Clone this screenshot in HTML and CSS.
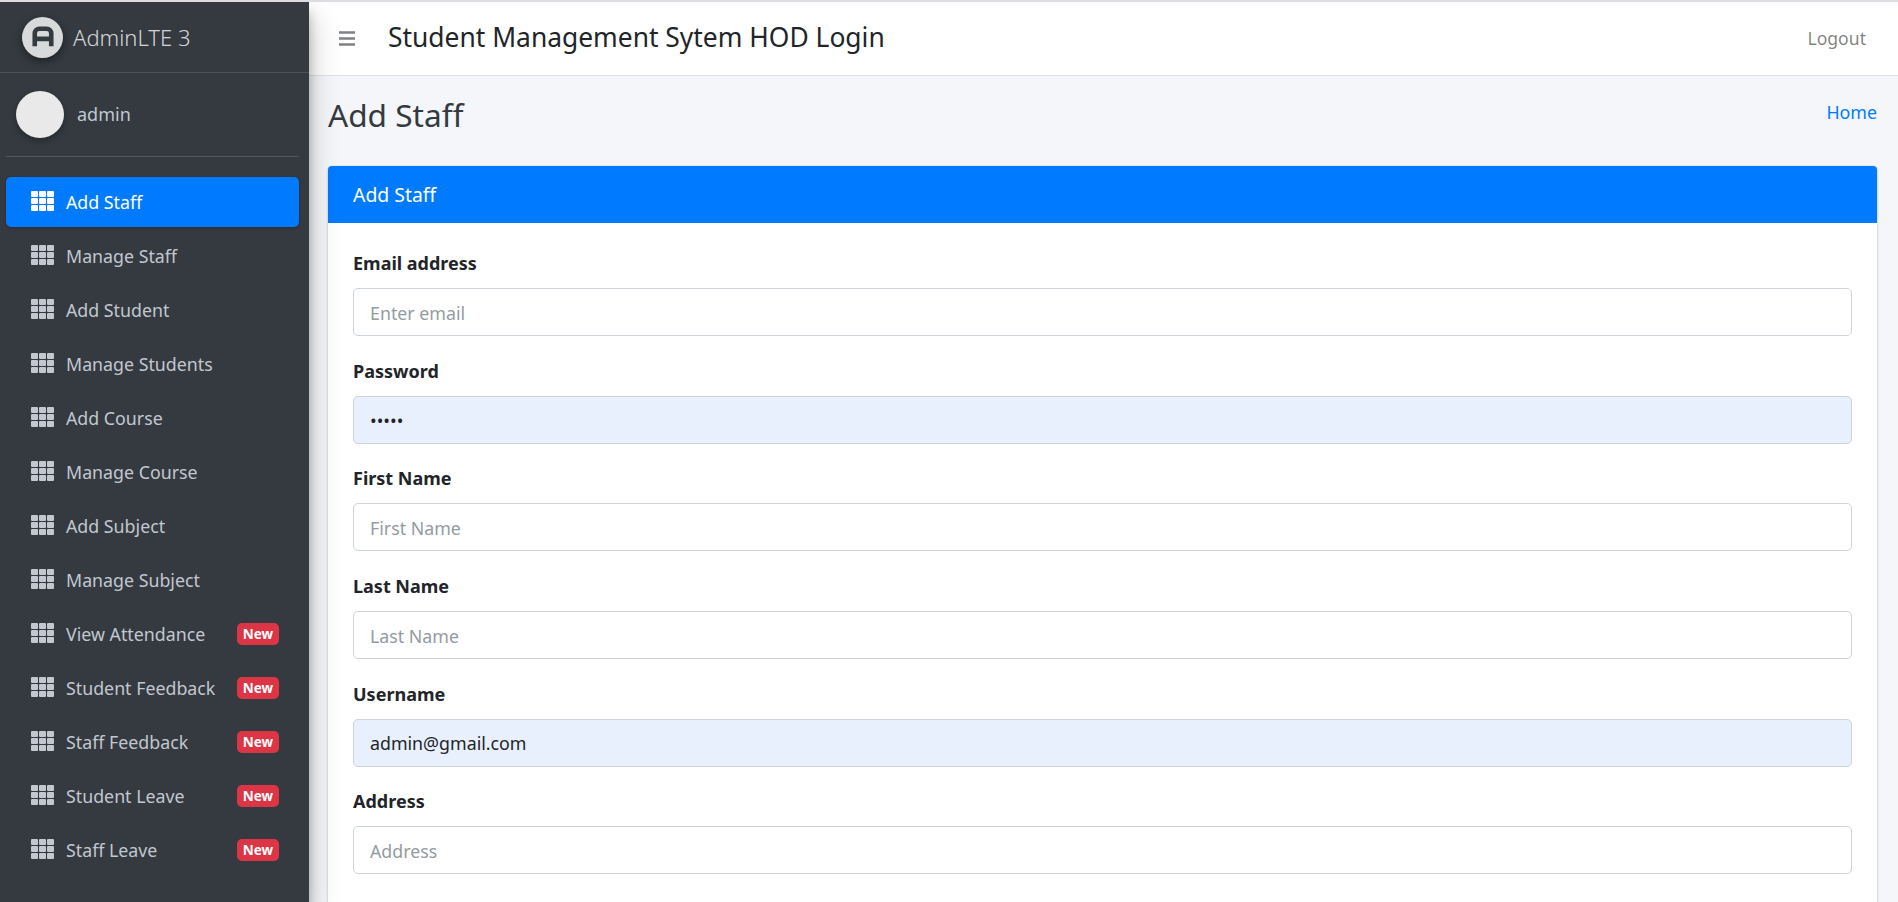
FILE: index.html

```html
<!DOCTYPE html>
<html lang="en">
<head>
  <meta charset="UTF-8">
  <meta name="viewport" content="width=device-width, initial-scale=1.0">
  <title>Add Staff</title>
  <link rel="stylesheet" href="styles.css">
</head>
<body>
  <svg class="icon-defs" width="0" height="0">
    <symbol id="th" viewBox="0 0 23 20">
      <rect x="0" y="0" width="7" height="6" rx="1"/><rect x="8" y="0" width="7" height="6" rx="1"/><rect x="16" y="0" width="7" height="6" rx="1"/>
      <rect x="0" y="7" width="7" height="6" rx="1"/><rect x="8" y="7" width="7" height="6" rx="1"/><rect x="16" y="7" width="7" height="6" rx="1"/>
      <rect x="0" y="14" width="7" height="6" rx="1"/><rect x="8" y="14" width="7" height="6" rx="1"/><rect x="16" y="14" width="7" height="6" rx="1"/>
    </symbol>
  </svg>

  <div class="wrapper">
    <aside class="sidebar">
      <a class="brand" href="#">
        <span class="brand-logo">
          <svg width="22" height="22" viewBox="0 0 24 24"><path d="M3 22V8a5 5 0 0 1 5-5h8a5 5 0 0 1 5 5v14M3 14h18" fill="none" stroke="#343a40" stroke-width="5"/></svg>
        </span>
        <span class="brand-text">AdminLTE 3</span>
      </a>
      <div class="user-panel">
        <span class="avatar"></span>
        <a class="user-name" href="#">admin</a>
      </div>
      <nav class="nav">
        <a class="nav-link active" href="#"><svg class="nav-icon"><use href="#th"/></svg>Add Staff</a>
        <a class="nav-link" href="#"><svg class="nav-icon"><use href="#th"/></svg>Manage Staff</a>
        <a class="nav-link" href="#"><svg class="nav-icon"><use href="#th"/></svg>Add Student</a>
        <a class="nav-link" href="#"><svg class="nav-icon"><use href="#th"/></svg>Manage Students</a>
        <a class="nav-link" href="#"><svg class="nav-icon"><use href="#th"/></svg>Add Course</a>
        <a class="nav-link" href="#"><svg class="nav-icon"><use href="#th"/></svg>Manage Course</a>
        <a class="nav-link" href="#"><svg class="nav-icon"><use href="#th"/></svg>Add Subject</a>
        <a class="nav-link" href="#"><svg class="nav-icon"><use href="#th"/></svg>Manage Subject</a>
        <a class="nav-link" href="#"><svg class="nav-icon"><use href="#th"/></svg>View Attendance<span class="badge">New</span></a>
        <a class="nav-link" href="#"><svg class="nav-icon"><use href="#th"/></svg>Student Feedback<span class="badge">New</span></a>
        <a class="nav-link" href="#"><svg class="nav-icon"><use href="#th"/></svg>Staff Feedback<span class="badge">New</span></a>
        <a class="nav-link" href="#"><svg class="nav-icon"><use href="#th"/></svg>Student Leave<span class="badge">New</span></a>
        <a class="nav-link" href="#"><svg class="nav-icon"><use href="#th"/></svg>Staff Leave<span class="badge">New</span></a>
      </nav>
    </aside>

    <div class="main">
      <header class="navbar">
        <svg class="menu-icon" width="16" height="15" viewBox="0 0 16 15"><path d="M0 1.5h16M0 7.5h16M0 13.5h16" stroke="#7f8183" stroke-width="2.4"/></svg>
        <span class="navbar-title">Student Management Sytem HOD Login</span>
        <a class="logout" href="#">Logout</a>
      </header>

      <div class="content">
        <div class="content-header">
          <h1>Add Staff</h1>
          <a class="crumb" href="#">Home</a>
        </div>

        <section class="card">
          <div class="card-header">Add Staff</div>
          <form class="card-body">
            <div class="form-group">
              <label>Email address</label>
              <input type="email" placeholder="Enter email">
            </div>
            <div class="form-group">
              <label>Password</label>
              <input class="autofill" type="password" value="admin">
            </div>
            <div class="form-group">
              <label>First Name</label>
              <input type="text" placeholder="First Name">
            </div>
            <div class="form-group">
              <label>Last Name</label>
              <input type="text" placeholder="Last Name">
            </div>
            <div class="form-group">
              <label>Username</label>
              <input class="autofill" type="text" value="admin@gmail.com">
            </div>
            <div class="form-group">
              <label>Address</label>
              <input type="text" placeholder="Address">
            </div>
          </form>
        </section>
      </div>
    </div>
  </div>
</body>
</html>
```

FILE: styles.css

```css
* {
  box-sizing: border-box;
}

html, body {
  height: 100%;
}

body {
  margin: 0;
  overflow: hidden;
  border-top: 2px solid #dcdde1;
  font-family: "Noto Sans", sans-serif;
  font-size: 18px;
  color: #212529;
  background: #f4f6f9;
}

a {
  text-decoration: none;
}

.icon-defs {
  position: absolute;
}

.wrapper {
  display: flex;
  height: 100%;
}

/* sidebar */
.sidebar {
  flex: 0 0 309px;
  background: #343a40;
  box-shadow: 0 14px 28px rgba(0,0,0,0.25), 0 10px 10px rgba(0,0,0,0.22);
  position: relative;
  z-index: 2;
}

.brand {
  display: flex;
  align-items: center;
  height: 71px;
  padding-left: 22px;
  border-bottom: 1px solid #4b545c;
  color: rgba(255,255,255,0.8);
}

.brand-logo {
  display: flex;
  align-items: center;
  justify-content: center;
  width: 41px;
  height: 41px;
  border-radius: 50%;
  background: #d8d9da;
  box-shadow: 0 3px 8px rgba(0,0,0,0.45);
}

.brand-text {
  margin-left: 10px;
  font-size: 22px;
  font-weight: 300;
}

.user-panel {
  display: flex;
  align-items: center;
  height: 84px;
  margin: 0 10px 0 6px;
  padding-left: 10px;
  border-bottom: 1px solid #4f5962;
}

.avatar {
  width: 48px;
  height: 47px;
  border-radius: 50%;
  background: #e9e9e9;
  box-shadow: 0 3px 6px rgba(0,0,0,0.3);
}

.user-name {
  margin-left: 13px;
  margin-bottom: 2px;
  color: #c2c7d0;
}

.nav {
  display: flex;
  flex-direction: column;
  gap: 4px;
  padding: 20px 10px 0 6px;
}

.nav-link {
  display: flex;
  align-items: center;
  height: 50px;
  padding: 0 20px 0 25px;
  border-radius: 5px;
  color: #c2c7d0;
  font-size: 17.8px;
  white-space: nowrap;
}

.nav-link.active {
  background: #007bff;
  color: #fff;
  box-shadow: 0 1px 3px rgba(0,0,0,0.24);
}

.nav-icon {
  width: 23px;
  height: 20px;
  margin-right: 12px;
  margin-top: -3px;
  fill: currentColor;
}

.badge {
  margin-left: auto;
  padding: 2px 6px;
  border-radius: 5px;
  background: #dc3545;
  color: #fff;
  font-size: 13.5px;
  font-weight: 700;
}

/* top bar */
.main {
  flex: 1;
  min-width: 0;
  display: flex;
  flex-direction: column;
}

.navbar {
  display: flex;
  align-items: center;
  height: 74px;
  padding: 0 32px 0 30px;
  background: #fff;
  border-bottom: 1px solid #dee2e6;
}

.navbar-title {
  margin-left: 33px;
  margin-bottom: 3px;
  font-size: 26.4px;
}

.logout {
  margin-left: auto;
  margin-bottom: 2px;
  font-size: 17.6px;
  color: rgba(0,0,0,0.5);
}

/* content */
.content {
  flex: 1;
  padding: 0 21px 0 19px;
  overflow: hidden;
}

.content-header {
  display: flex;
  justify-content: space-between;
  height: 90px;
  padding-top: 17px;
}

h1 {
  margin: 0;
  font-size: 31.6px;
  font-weight: 400;
  color: #343a40;
}

.crumb {
  color: #007bff;
  padding-top: 7px;
  font-size: 17.8px;
}

.card {
  min-height: 800px;
  background: #fff;
  border-radius: 4px;
  box-shadow: 0 0 1px rgba(0,0,0,0.25), 0 1px 3px rgba(0,0,0,0.2);
}

.card-header {
  height: 57px;
  padding: 15px 25px;
  border-radius: 4px 4px 0 0;
  background: #007bff;
  color: #fff;
  font-size: 19.4px;
}

.card-body {
  padding: 27px 25px;
}

.form-group {
  display: flex;
  flex-direction: column;
  height: 107.7px;
}

label {
  height: 38px;
  font-weight: 700;
  line-height: 26px;
}

input {
  height: 48px;
  padding: 1px 16px 0;
  border: 1px solid #ced4da;
  border-radius: 5px;
  background: #fff;
  color: #495057;
  font-family: inherit;
  font-size: 17.8px;
}

input::placeholder {
  color: #939ba2;
}

input.autofill {
  background: #e8f0fe;
  color: #212529;
}
```
